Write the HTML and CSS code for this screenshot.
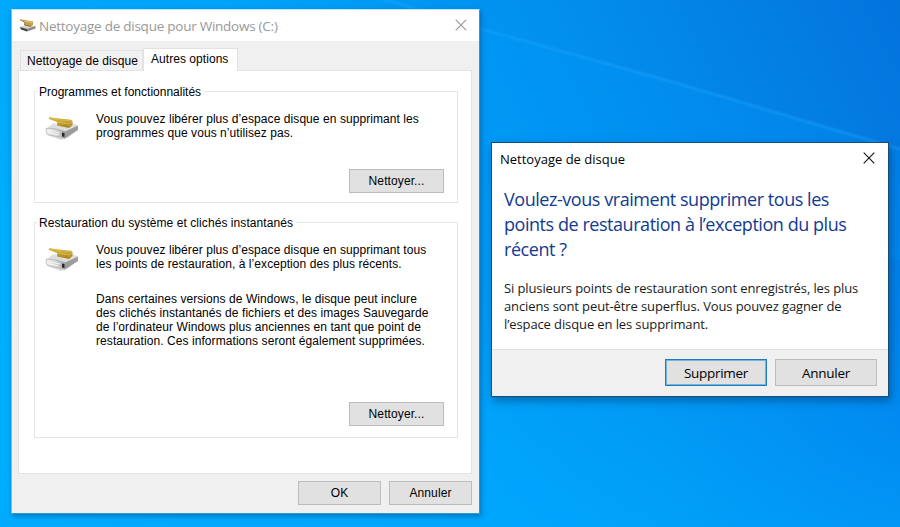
FILE: index.html
```html
<!DOCTYPE html>
<html lang="fr">
<head>
<meta charset="utf-8">
<title>Nettoyage de disque</title>
<link rel="stylesheet" href="styles.css">
</head>
<body>
<svg class="wallpaper" viewBox="0 0 900 527" preserveAspectRatio="none" aria-hidden="true">
  <defs>
    <linearGradient id="sky" x1="0" y1="450" x2="900" y2="0" gradientUnits="userSpaceOnUse">
      <stop offset="0" stop-color="#00b0ff"/><stop offset=".42" stop-color="#00a2fa"/><stop offset=".7" stop-color="#028eed"/><stop offset="1" stop-color="#0473dd"/>
    </linearGradient>
    <linearGradient id="floor" x1="0" y1="330" x2="0" y2="527" gradientUnits="userSpaceOnUse">
      <stop offset="0" stop-color="#00a8ff" stop-opacity="0"/><stop offset="1" stop-color="#00a8ff" stop-opacity=".55"/>
    </linearGradient>
    <radialGradient id="corner" cx="900" cy="420" r="250" gradientUnits="userSpaceOnUse">
      <stop offset="0" stop-color="#0088f6" stop-opacity=".5"/><stop offset="1" stop-color="#0090f5" stop-opacity="0"/>
    </radialGradient>
    <filter id="soft"><feGaussianBlur stdDeviation="1"/></filter>
  </defs>
  <rect width="900" height="527" fill="url(#sky)"/>
  <rect y="330" width="900" height="197" fill="url(#floor)"/>
  <rect width="900" height="527" fill="url(#corner)"/>
  <path d="M370 -5L485 30L666 80L900 149V260H480V31" fill="#00a0ff" opacity=".2"/>
  <path d="M370 -5L485 30L666 80L900 149" fill="none" stroke="#23a9ff" stroke-width="2" opacity=".55" filter="url(#soft)"/>
</svg>
<svg class="symbols" aria-hidden="true">
  <defs>
    <linearGradient id="gold" x2="1" y2="1"><stop stop-color="#d6b53c"/><stop offset=".6" stop-color="#c6a334"/><stop offset="1" stop-color="#a58225"/></linearGradient>
    <linearGradient id="metal" x2="1"><stop stop-color="#f2f2f2"/><stop offset=".5" stop-color="#d8d8d8"/><stop offset="1" stop-color="#aaa"/></linearGradient>
    <symbol id="cleanup" viewBox="0 0 34 24">
      <path d="M1 17L17 22.500 33 11 24 21 16 24 2 19Z" fill="#aaa" opacity=".45"/>
      <path d="M1 12.500L8 7.500H29L33 10 20 16.500 3 14.500Z" fill="#dedede"/>
      <path d="M1 12.500Q8 11.500 20 15.500V22.500L3 18.500Q.5 17 1 12.500Z" fill="url(#metal)" stroke="#999" stroke-width=".5"/>
      <path d="M20 15.500L33 9.500V14L20 22.500Z" fill="#9c9c9c"/>
      <path d="M3 14.500L15 17M3 16.500L14 19" stroke="#fafafa" stroke-width=".8"/>
      <path d="M17 16.500L19.500 17V21L17 20.400Z" fill="#252525"/>
      <path d="M4 1.200L12 2.200 26 3.700 27.500 5V9L24 12 12 9.500V6L4 3Z" fill="url(#gold)"/>
      <path d="M4 1.200L12 3.500 27 5M12 6L24 8 27 6" fill="none" stroke="#dfc35b" stroke-width=".7"/>
      <path d="M14 7V10M16 7.300V10.300M18 7.600V10.600M20 8V11M22 8V11.500" stroke="#937111" stroke-width=".5"/>
    </symbol>
    <symbol id="cleanup-small" viewBox="0 0 16 13">
      <path d="M0 8L6 6 15 7V9L7 12.500 1 10Z" fill="#d6d6d6"/>
      <path d="M0 8L7 10V12.600L1 10.500Z" fill="#444"/>
      <path d="M7 10L15.500 7V9.500L7 12.600Z" fill="#888"/>
      <path d="M0 .5L5 1 13 2.500V6L11 7.500 4.500 6 5 3Z" fill="#c9a04a"/>
      <path d="M0 .7L4 2.800 5 4 4.500 6 11 7.500" fill="none" stroke="#7a5d28" stroke-width=".8"/>
      <path d="M5 2L12 3.500" stroke="#e5c76c"/>
    </symbol>
  </defs>
</svg>

<section class="window main-window">
  <header class="titlebar">
    <svg class="title-icon"><use href="#cleanup-small"/></svg>
    <h1 class="main-title">Nettoyage de disque pour Windows (C:)</h1>
    <svg class="close" viewBox="0 0 12 12"><path d="M.7.700L11.300 11.300M11.300.700L.7 11.300"/></svg>
  </header>
  <nav class="tabs">
    <span class="tab">Nettoyage de disque</span>
    <span class="tab tab-active">Autres options</span>
  </nav>
  <main class="panel">
    <section class="group programs">
      <h2 class="legend"><span class="legend-programs">Programmes et fonctionnalités</span></h2>
      <div class="group-body">
        <svg class="disk"><use href="#cleanup"/></svg>
        <div class="copy">
          <p>Vous pouvez libérer plus d’espace disque en supprimant les<br>programmes que vous n’utilisez pas.</p>
        </div>
      </div>
      <button class="button clean">Nettoyer...</button>
    </section>
    <section class="group restore">
      <h2 class="legend"><span>Restauration du système et clichés instantanés</span></h2>
      <div class="group-body">
        <svg class="disk"><use href="#cleanup"/></svg>
        <div class="copy">
          <p>Vous pouvez libérer plus d’espace disque en supprimant tous<br>les points de restauration, à l’exception des plus récents.</p>
          <p class="details">Dans certaines versions de Windows, le disque peut inclure<br>des clichés instantanés de fichiers et des images Sauvegarde<br>de l’ordinateur Windows plus anciennes en tant que point de<br>restauration. Ces informations seront également supprimées.</p>
        </div>
      </div>
      <button class="button clean">Nettoyer...</button>
    </section>
  </main>
  <footer class="actions">
    <button class="button">OK</button>
    <button class="button">Annuler</button>
  </footer>
</section>

<section class="window dialog">
  <header class="dialog-titlebar">
    <h1 class="dialog-title">Nettoyage de disque</h1>
    <svg class="close" viewBox="0 0 12 12"><path d="M.7.700L11.300 11.300M11.300.700L.7 11.300"/></svg>
  </header>
  <div class="dialog-body">
    <h2 class="question">Voulez-vous vraiment supprimer tous les<br>points de restauration à l’exception du plus<br>récent ?</h2>
    <p class="explanation">Si plusieurs points de restauration sont enregistrés, les plus<br>anciens sont peut-être superflus. Vous pouvez gagner de<br>l’espace disque en les supprimant.</p>
  </div>
  <footer class="dialog-actions">
    <button class="button primary">Supprimer</button>
    <button class="button">Annuler</button>
  </footer>
</section>
</body>
</html>
```
FILE: styles.css
```css
* { box-sizing: border-box; }
body { margin: 0; width: 900px; height: 527px; overflow: hidden; position: relative; background: #00a5fb; font-family: "Liberation Sans", sans-serif; color: #000; }
h1, h2, p { margin: 0; font-weight: 400; white-space: nowrap; }
.wallpaper { position: absolute; width: 900px; height: 527px; }
.symbols { position: absolute; width: 0; height: 0; }
.window { position: absolute; display: flex; flex-direction: column; }
.button { border: 1px solid #bcbcbc; border-radius: 0; background: #e1e1e1; color: #000; padding: 0; font-family: inherit; font-size: 12px; letter-spacing: .1px; }
.close { flex: none; width: 12px; height: 12px; fill: none; stroke: #999; stroke-width: 1.1; }

.main-window { left: 11px; top: 9px; width: 469px; height: 505px; padding: 0 7px 8px; background: linear-gradient(#fff 31px, #f0f0f0 31px); border: 1px solid #2c9bcc; border-top-color: #bceaff; border-left-color: #68c8ef; box-shadow: 1px 2px 5px #00407080; }
.titlebar { height: 31px; flex: none; display: flex; align-items: center; }
.title-icon { width: 16px; height: 13px; margin-left: 1px; }
.main-title { margin-left: 3px; flex: 1; font: 13.5px "Open Sans", sans-serif; letter-spacing: -.25px; color: #999; }
.titlebar .close { margin-right: 5px; margin-bottom: 2px; }
.tabs { height: 29px; flex: none; display: flex; align-items: flex-end; padding-left: 1px; font-size: 12px; letter-spacing: .05px; }
.tab { width: 123px; height: 20px; border: 1px solid #e2e2e2; border-bottom: 0; line-height: 21px; padding-left: 6px; white-space: nowrap; background: #f1f1f1; }
.tab-active { width: 95px; height: 23px; margin-bottom: -1px; padding-left: 7px; background: #fff; line-height: 21px; z-index: 1; }
.panel { width: 454px; height: 404px; flex: none; margin-left: -1px; padding: 20px 13px 0 15px; display: flex; flex-direction: column; gap: 19px; background: #fff; border: 1px solid #e3e3e3; font-size: 12px; line-height: 14px; letter-spacing: .07px; }
.group { border: 1px solid #e5e5e5; width: 424px; display: flex; flex-direction: column; flex: none; }
.programs { height: 112px; }
.restore { height: 216px; }
.legend { height: 14px; margin: -8px 0 0 2px; font-size: 12px; line-height: 16px; }
.legend span { background: #fff; padding: 0 3px 0 2px; }
.legend .legend-programs { letter-spacing: 0; }
.group-body { display: flex; align-items: flex-start; margin: 14px 0 0 10px; }
.disk { width: 34px; height: 24px; margin-top: 4px; flex: none; }
.copy { margin-left: 17px; }
.details { margin-top: 21px; }
.clean { width: 95px; height: 24px; margin: auto 13px 9px auto; }
.restore .clean { margin-bottom: 11px; }
.actions { display: flex; gap: 8px; justify-content: flex-end; margin-top: 7px; }
.actions .button { width: 83px; height: 24px; }

.dialog { left: 491px; top: 142px; width: 398px; height: 255px; background: #fff; border: 1px solid #174e78; box-shadow: 2px 4px 8px #00376980; font-family: "Open Sans", sans-serif; }
.dialog-titlebar { height: 31px; flex: none; display: flex; align-items: center; padding: 2px 13px 0 8px; }
.dialog-title { flex: 1; font-size: 13px; line-height: 18px; margin-bottom: 2px; }
.dialog .close { stroke: #111; margin-bottom: 3px; }
.dialog-body { padding: 13px 12px 0; height: 175px; flex: none; }
.question { font-size: 18px; line-height: 25px; letter-spacing: -.45px; color: #123a91; }
.explanation { margin-top: 17px; font-size: 13px; line-height: 18px; letter-spacing: -.11px; color: #1a1a1a; }
.dialog-actions { flex: 1; display: flex; justify-content: flex-end; gap: 8px; padding: 9px 11px 0; background: #f0f0f0; border-top: 1px solid #dfdfdf; }
.dialog .button { width: 102px; height: 27px; font-size: 13.5px; letter-spacing: -.3px; }
.dialog .primary { border: 1px solid #1c7cc4; box-shadow: inset 0 0 0 1px #78b4dd; }
```
